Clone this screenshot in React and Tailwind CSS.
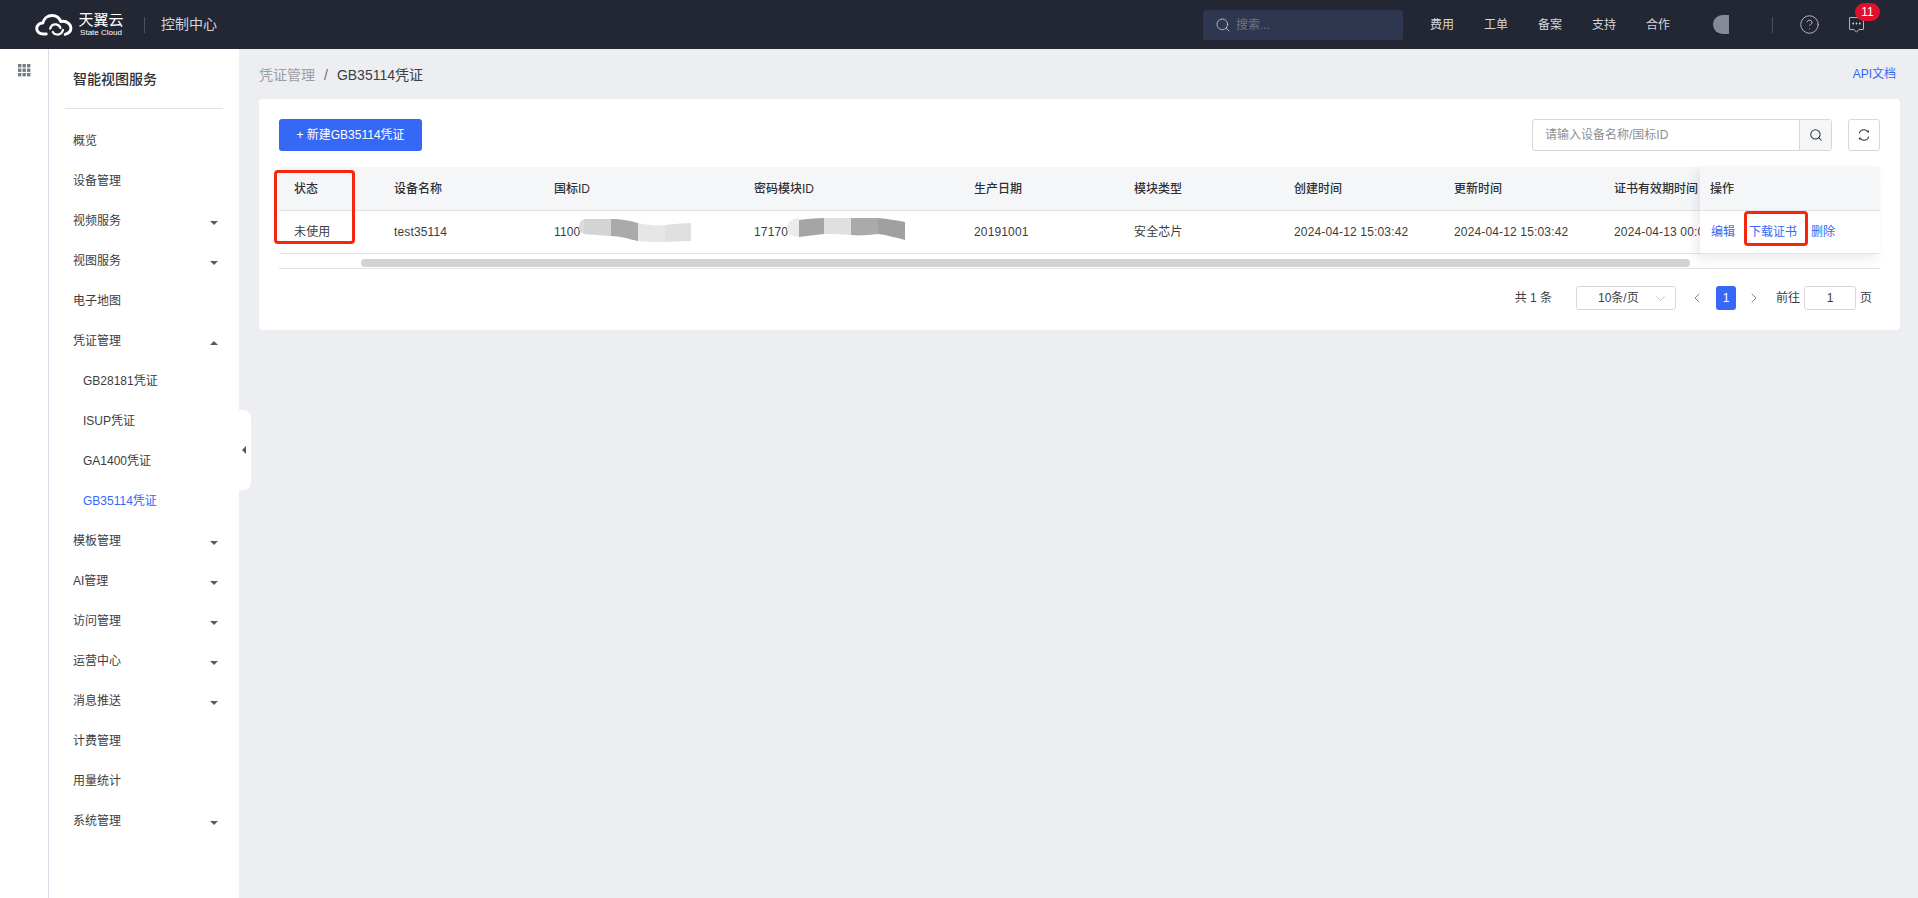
import React from "react";
import { Search, CircleHelp, ChevronDown, ChevronLeft, ChevronRight } from "lucide-react";

const FONT = "font-['Liberation_Sans','Noto_Sans_CJK_SC',sans-serif]";

const menu = [
  { name: "概览" },
  { name: "设备管理" },
  { name: "视频服务", arrow: "down" },
  { name: "视图服务", arrow: "down" },
  { name: "电子地图" },
  { name: "凭证管理", arrow: "up" },
  { name: "GB28181凭证", sub: true },
  { name: "ISUP凭证", sub: true },
  { name: "GA1400凭证", sub: true },
  { name: "GB35114凭证", sub: true, active: true },
  { name: "模板管理", arrow: "down" },
  { name: "AI管理", arrow: "down" },
  { name: "访问管理", arrow: "down" },
  { name: "运营中心", arrow: "down" },
  { name: "消息推送", arrow: "down" },
  { name: "计费管理" },
  { name: "用量统计" },
  { name: "系统管理", arrow: "down" },
];

const columns = [
  { title: "状态", value: "未使用", width: "w-[99px]" },
  { title: "设备名称", value: "test35114", width: "w-[160px]" },
  { title: "国标ID", value: "1100", width: "w-[200px]", blob: "a" },
  { title: "密码模块ID", value: "17170", width: "w-[220px]", blob: "b" },
  { title: "生产日期", value: "20191001", width: "w-[160px]" },
  { title: "模块类型", value: "安全芯片", width: "w-[160px]" },
  { title: "创建时间", value: "2024-04-12 15:03:42", width: "w-[160px]" },
  { title: "更新时间", value: "2024-04-12 15:03:42", width: "w-[160px]" },
  { title: "证书有效期时间", value: "2024-04-13 00:00:00", width: "w-[160px]" },
];

const Logo = () => (
  <svg width="38" height="24" viewBox="0 0 44 26" fill="none" stroke="#fff" strokeWidth="3.4" strokeLinecap="round" strokeLinejoin="round">
    <path d="M13 23.5H9.5C5 23.5 2 20.6 2 17C2 13.4 5 10.6 9 10.8C10.2 5.6 14.6 2 19.6 2C24.4 2 28.2 4.8 29.8 9C30.6 8.8 31.4 8.7 32.2 8.7C37.6 8.7 41.6 12.4 41.6 16.6C41.6 20.6 38.6 23 35 23.8" />
    <path d="M17.6 17.2C18.6 13.8 21.4 12 24.4 12.4C27 12.8 28.6 14.2 29.4 16.4" strokeWidth="2.6" />
    <path d="M32.4 18.8C31.4 22 28.6 24.2 25.4 24C23 23.8 21.4 22.6 20.6 21" strokeWidth="2.6" />
  </svg>
);

const MessageIcon = () => (
  <svg width="17" height="18" viewBox="0 0 17 18" fill="none" stroke="#b5b7bf" strokeWidth="1">
    <path d="M2 1.5H15C15.4 1.5 15.5 1.7 15.5 2V13C15.5 13.4 15.3 13.5 15 13.5H11L8.5 16.2L6 13.5H2C1.7 13.5 1.5 13.3 1.5 13V2C1.5 1.7 1.7 1.5 2 1.5Z" />
    <circle cx="5.2" cy="7.5" r="0.9" fill="#d5d6da" stroke="none" />
    <circle cx="8.5" cy="7.5" r="0.9" fill="#d5d6da" stroke="none" />
    <circle cx="11.8" cy="7.5" r="0.9" fill="#d5d6da" stroke="none" />
  </svg>
);

const RefreshIcon = () => (
  <svg width="14" height="14" viewBox="0 0 14 14" fill="none" stroke="#33353b" strokeWidth="1.1">
    <path d="M2.2 5.4C2.9 3.3 4.8 1.8 7 1.8C8.6 1.8 10 2.5 10.9 3.7" />
    <path d="M11.8 8.6C11.1 10.7 9.2 12.2 7 12.2C5.4 12.2 4 11.5 3.1 10.3" />
    <path d="M9.7 4.2L12 4.4V1.9Z" fill="#33353b" stroke="none" />
    <path d="M4.3 9.8L2 9.6V12.1Z" fill="#33353b" stroke="none" />
  </svg>
);

const GridIcon = () => (
  <svg width="13" height="13" viewBox="0 0 13 13" fill="#777b84">
    {[0, 4.5, 9].map((y) =>
      [0, 4.5, 9].map((x) => <rect key={`${x}-${y}`} x={x} y={y} width="3.4" height="3.4" />)
    )}
  </svg>
);

const Caret = ({ up }) => (
  <svg width="8" height="4" viewBox="0 0 8 4" fill="#555a66" className="mt-[4px]">
    <path d={up ? "M4 0L8 4H0Z" : "M0 0H8L4 4Z"} />
  </svg>
);

// smeared-out ids in the first row
const BlobA = () => (
  <svg width="112" height="24" viewBox="0 0 112 24" className="absolute left-[41px] top-[-5px]">
    <path d="M7 1C3 1 0 4 0 9C0 14 3 16 7 16V1Z" fill="#dcdcdc" />
    <path d="M5 1H32V18C22 17 12 17 5 16Z" fill="#d4d4d4" />
    <path d="M32 1C42 1 52 3 59 5V23C50 21 40 18 32 18Z" fill="#aaaaaa" />
    <path d="M59 5C68 7 76 8 86 7V24C76 24 68 24 59 23Z" fill="#e6e6e6" />
    <path d="M86 7C94 6 103 5 112 5V23C103 23 94 24 86 24Z" fill="#e0e0e0" />
  </svg>
);

const BlobB = () => (
  <svg width="118" height="24" viewBox="0 0 118 24" className="absolute left-[49px] top-[-6px]">
    <path d="M12 1C5 1 0 5 0 11C0 16 5 20 12 20Z" fill="#ebebeb" />
    <path d="M12 3C20 2 28 1 37 1V17C28 18 20 19 12 20Z" fill="#a5a5a5" />
    <path d="M37 1H64V18C54 17 45 17 37 17Z" fill="#e0e0e0" />
    <path d="M64 1H91V17C82 18 72 19 64 18Z" fill="#aaaaaa" />
    <path d="M91 1C100 2 110 3 118 5V23C110 21 100 18 91 17Z" fill="#a0a0a0" />
  </svg>
);

const Sidebar = () => (
  <div className="w-[190px] shrink-0 bg-white">
    <div className="mx-[16px] mb-[12px] flex h-[60px] items-center border-b border-[#e1e3ea] pl-[8px] pt-[2px] text-[14px] font-medium text-[#2f3036]">
      智能视图服务
    </div>
    {menu.map((item) => (
      <div
        key={item.name}
        className={`flex h-[40px] items-center justify-between pr-[21px] text-[12px] ${item.sub ? "pl-[34px]" : "pl-[24px]"} ${item.active ? "text-[#3468f5]" : "text-[#3c3d42]"}`}
      >
        <span>{item.name}</span>
        {item.arrow && <Caret up={item.arrow === "up"} />}
      </div>
    ))}
  </div>
);

const Table = () => (
  <div className="relative mt-[16px]">
    <div className="flex">
      <div className="min-w-0 flex-1 overflow-hidden">
        <div className="flex h-[43px] w-max items-center bg-[#f5f6f8] text-[12px] font-medium text-[#2f3036]">
          {columns.map((col) => (
            <div key={col.title} className={`${col.width} pl-[16px] first:pl-[15px] whitespace-nowrap`}>{col.title}</div>
          ))}
        </div>
        <div className="flex h-[44px] w-max items-center border-y border-[#e1e3ea] text-[12px] tracking-[0.15px] text-[#3c3d42]">
          {columns.map((col) => (
            <div key={col.title} className={`${col.width} relative pl-[16px] first:pl-[15px] whitespace-nowrap`}>
              {col.value}
              {col.blob === "a" && <BlobA />}
              {col.blob === "b" && <BlobB />}
            </div>
          ))}
        </div>
      </div>
      <div className="z-10 w-[180px] shrink-0 shadow-[-4px_4px_10px_rgba(40,50,80,0.1)]">
        <div className="flex h-[43px] items-center bg-[#f5f6f8] pl-[10px] text-[12px] font-medium text-[#2f3036]">操作</div>
        <div className="flex h-[44px] items-center gap-[14px] border-y border-[#e1e3ea] bg-white pl-[11px] text-[12px] text-[#3468f5]">
          <span>编辑</span>
          <span>下载证书</span>
          <span>删除</span>
        </div>
      </div>
    </div>
    <div className="h-[15px] border-b border-[#e1e3ea] pl-[82px] pt-[5px]">
      <div className="h-[8px] w-[1329px] rounded-full bg-[#d3d3d3]" />
    </div>
    <div className="absolute left-[-5px] top-[3px] z-20 h-[74px] w-[81px] rounded-[4px] border-[3px] border-[#f5260b]" />
    <div className="absolute left-[1465px] top-[44px] z-20 h-[35px] w-[64px] rounded-[4px] border-[3px] border-[#f5260b]" />
  </div>
);

const Pagination = () => (
  <div className="mt-[17px] flex h-[24px] items-center justify-end pr-[8px] text-[12px] text-[#3c3d42]">
    <span>共 1 条</span>
    <div className="ml-[24px] flex h-[24px] w-[100px] items-center justify-between rounded-[3px] border border-[#d5d7dc] pl-[21px] pr-[7px]">
      <span>10条/页</span>
      <ChevronDown size={15} strokeWidth={1} color="#9a9ca3" />
    </div>
    <ChevronLeft size={16} strokeWidth={1.2} color="#666" className="ml-[13px]" />
    <div className="ml-[11px] flex h-[24px] w-[20px] items-center justify-center rounded-[3px] bg-[#3468f5] text-white">1</div>
    <ChevronRight size={16} strokeWidth={1.2} color="#666" className="ml-[10px]" />
    <span className="ml-[14px]">前往</span>
    <div className="ml-[4px] flex h-[24px] w-[52px] items-center justify-center rounded-[3px] border border-[#d5d7dc]">1</div>
    <span className="ml-[4px]">页</span>
  </div>
);

const App = () => {
  return (
    <div className={`flex h-screen flex-col overflow-hidden bg-[#edeef2] ${FONT}`}>
      <header className="flex h-[49px] shrink-0 items-center whitespace-nowrap bg-[#232633] pr-[53px] text-[#d5d6da]">
        <div className="ml-[35px] flex items-center">
          <Logo />
          <div className="ml-[6px] flex w-[44px] flex-col items-center text-white">
            <span className="text-[15px] leading-[16px]">天翼云</span>
            <span className="text-[8px] leading-[10px]">State Cloud</span>
          </div>
        </div>
        <div className="ml-[21px] h-[16px] w-px bg-[#4d505c]" />
        <span className="ml-[16px] text-[14px]">控制中心</span>
        <div className="ml-auto flex h-[30px] w-[200px] items-center rounded-[2px] bg-[#2f3650] pl-[12px] text-[12px] text-[#71747f]">
          <Search size={16} strokeWidth={1.3} color="#c6c8ce" />
          <span className="ml-[5px]">搜索...</span>
        </div>
        <div className="ml-[27px] flex gap-[30px] text-[12px]">
          <span>费用</span>
          <span>工单</span>
          <span>备案</span>
          <span>支持</span>
          <span>合作</span>
        </div>
        <div className="ml-[43px] h-[19px] w-[16px] rounded-l-full bg-[#868997]" />
        <div className="ml-[43px] h-[16px] w-px bg-[#4d505c]" />
        <CircleHelp size={21} strokeWidth={1} color="#c4c5ca" className="ml-[26px]" />
        <div className="relative ml-[28px] flex">
          <MessageIcon />
          <span className="absolute left-[7px] top-[-13px] flex h-[18px] w-[25px] items-center justify-center rounded-full bg-[#e0102f] text-[12px] text-white">11</span>
        </div>
      </header>

      <div className="flex min-h-0 flex-1">
        <div className="w-[49px] shrink-0 border-r border-[#d9dce6] bg-white pl-[18px] pt-[15px]">
          <GridIcon />
        </div>
        <Sidebar />
        <div className="relative min-w-0 flex-1 pl-[20px] pr-[18px]">
          <div className="absolute left-0 top-[361px] flex h-[80px] w-[12px] items-center justify-center rounded-r-[8px] bg-white pr-[2px]">
            <svg width="4" height="8" viewBox="0 0 4 8" fill="#555a66">
              <path d="M4 0V8L0 4Z" />
            </svg>
          </div>
          <div className="flex h-[50px] items-center justify-between pr-[4px]">
            <div className="mt-[2px] text-[14px] text-[#9b9da4]">
              凭证管理<span className="mx-[9px] text-[#6b6d74]">/</span>
              <span className="text-[#3c3d42]">GB35114凭证</span>
            </div>
            <span className="text-[12px] text-[#3468f5]">API文档</span>
          </div>
          <div className="h-[231px] rounded-[4px] bg-white px-[20px] pt-[20px]">
            <div className="flex h-[32px] items-center justify-between">
              <button className="h-[32px] w-[143px] rounded-[3px] bg-[#3468f5] text-[12px] text-white">+ 新建GB35114凭证</button>
              <div className="flex items-center gap-[16px]">
                <div className="flex h-[32px] w-[300px] rounded-[3px] border border-[#d5d7dc]">
                  <div className="flex flex-1 items-center pl-[12px] text-[12px] text-[#8d8f96]">请输入设备名称/国标ID</div>
                  <div className="flex w-[32px] items-center justify-center border-l border-[#d5d7dc] bg-[#f5f6f8]">
                    <Search size={14} strokeWidth={1.8} color="#33353b" />
                  </div>
                </div>
                <div className="flex h-[32px] w-[32px] items-center justify-center rounded-[3px] border border-[#d5d7dc]">
                  <RefreshIcon />
                </div>
              </div>
            </div>
            <Table />
            <Pagination />
          </div>
        </div>
      </div>
    </div>
  );
};

export default App;
